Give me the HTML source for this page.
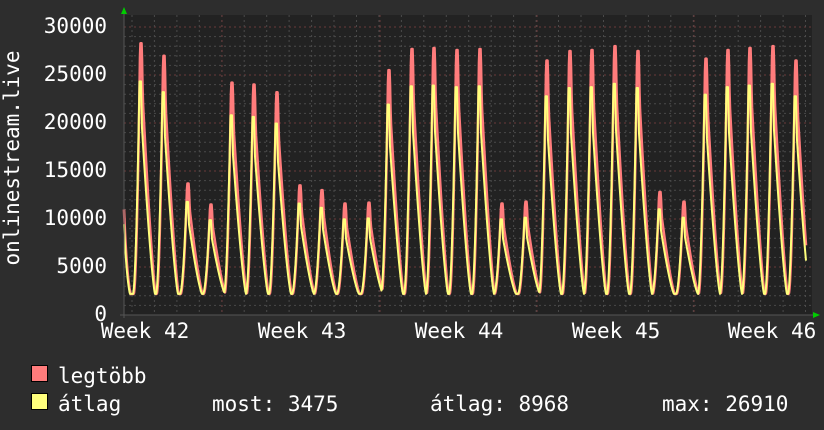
<!DOCTYPE html>
<html><head><meta charset="utf-8"><style>
html,body{margin:0;padding:0;background:#2d2d2d;}
svg{display:block}
text{font-family:"DejaVu Sans Mono","Liberation Mono",monospace;fill:#fff;font-size:21px}
</style></head><body>
<svg id="g" width="824" height="430" xmlns="http://www.w3.org/2000/svg">
<rect width="824" height="430" fill="#2d2d2d"/>
<rect x="124" y="15" width="688" height="300" fill="#222"/>
<g id="grid"></g>
<path id="mx" fill="none" stroke="#ff7c7c" stroke-width="2.6" stroke-linejoin="round"/>
<path id="av" fill="none" stroke="#ffff7c" stroke-width="2" stroke-linejoin="round"/>
<line x1="124" y1="10" x2="124" y2="318" stroke="#555"/>
<line x1="120" y1="315" x2="816" y2="315" stroke="#555"/>
<polygon points="121,14 127,14 124,7" fill="#0c0"/>
<polygon points="813,312 813,318 820,315" fill="#0c0"/>
<g text-anchor="end">
<text x="107" y="33">30000</text><text x="107" y="81">25000</text><text x="107" y="129">20000</text>
<text x="107" y="177">15000</text><text x="107" y="225">10000</text><text x="107" y="273">5000</text>
<text x="107" y="321">0</text></g>
<g text-anchor="middle">
<text x="145" y="338">Week 42</text><text x="302" y="338">Week 43</text><text x="459" y="338">Week 44</text>
<text x="616" y="338">Week 45</text><text x="772" y="338">Week 46</text></g>
<text transform="translate(19,158) rotate(-90)" text-anchor="middle">onlinestream.live</text>
<rect x="31.5" y="365.5" width="16" height="16" fill="#ff7c7c" stroke="#000"/>
<rect x="31.5" y="393.5" width="16" height="16" fill="#ffff7c" stroke="#000"/>
<text x="58" y="383">legtöbb</text>
<text x="58" y="411">átlag</text>
<text x="212" y="411">most: 3475</text>
<text x="430" y="411">átlag: 8968</text>
<text x="662" y="411">max: 26910</text>
</svg>
<script>
var g=document.getElementById('grid'),s='';
function Y(v){return 315-v*0.0096;}
for(var v=1000;v<=30000;v+=1000){var y=Y(v);s+='<line x1="124" x2="812" y1="'+y+'" y2="'+y+'" stroke="'+(v%5000?'#4a4a4a':'#6a3a3a')+'" stroke-dasharray="2,3"/>';}
for(var x=132;x<812;x+=22.45){s+='<line y1="15" y2="315" x1="'+x.toFixed(1)+'" x2="'+x.toFixed(1)+'" stroke="#4a4a4a" stroke-dasharray="2,3"/>';}
[222,380,537,694].forEach(function(x){s+='<line y1="15" y2="315" x1="'+x+'" x2="'+x+'" stroke="#6a3a3a" stroke-dasharray="2,3"/>';});
g.innerHTML=s;
var P=[[140,28.3],[163,27],[187,13.7],[210,11.5],[231,24.2],[253,24],[276,23.2],[299,13.5],[321,13],[344,11.6],[368,11.7],[388,25.5],[411,27.7],[433,27.8],[456,27.6],[479,27.7],[501,11.6],[525,11.8],[546,26.5],[569,27.5],[591,27.6],[614,28],[637,27.5],[659,12.8],[683,11.8],[705,26.7],[727,27.6],[749,27.8],[772,28],[795,26.5]];
function val(x,r,sh){var best=0,base=2200;
for(var i=0;i<P.length;i++){var p=P[i][0]+sh,pk=P[i][1]*1000*r,d=x-p,v;
 if(d<-7||d>16)continue;
 if(d<-0.5){var t=(d+7)/6.5;v=base+(pk-base)*Math.pow(t,1.8);}
 else if(d<1)v=pk;
 else if(d<2)v=pk-(pk*0.2)*(d-1);
 else {var t=(d-2)/13; if(t>1)t=1; v=base+(pk*0.8-base)*Math.pow(1-t,1.3);}
 best=Math.max(best,v);}
 if(x<132)best=Math.max(best,11000*r*Math.exp(-(x-124)/4));
 return Math.max(best,base);}
var a='',b='';
for(var x=124;x<=806;x+=0.5){a+=(a?' L':'M')+x+','+Y(val(x,1,0.7)).toFixed(1);b+=(b?' L':'M')+x+','+Y(val(x,0.86,0)).toFixed(1);}
document.getElementById('mx').setAttribute('d',a);
document.getElementById('av').setAttribute('d',b);
</script>
</body></html>
